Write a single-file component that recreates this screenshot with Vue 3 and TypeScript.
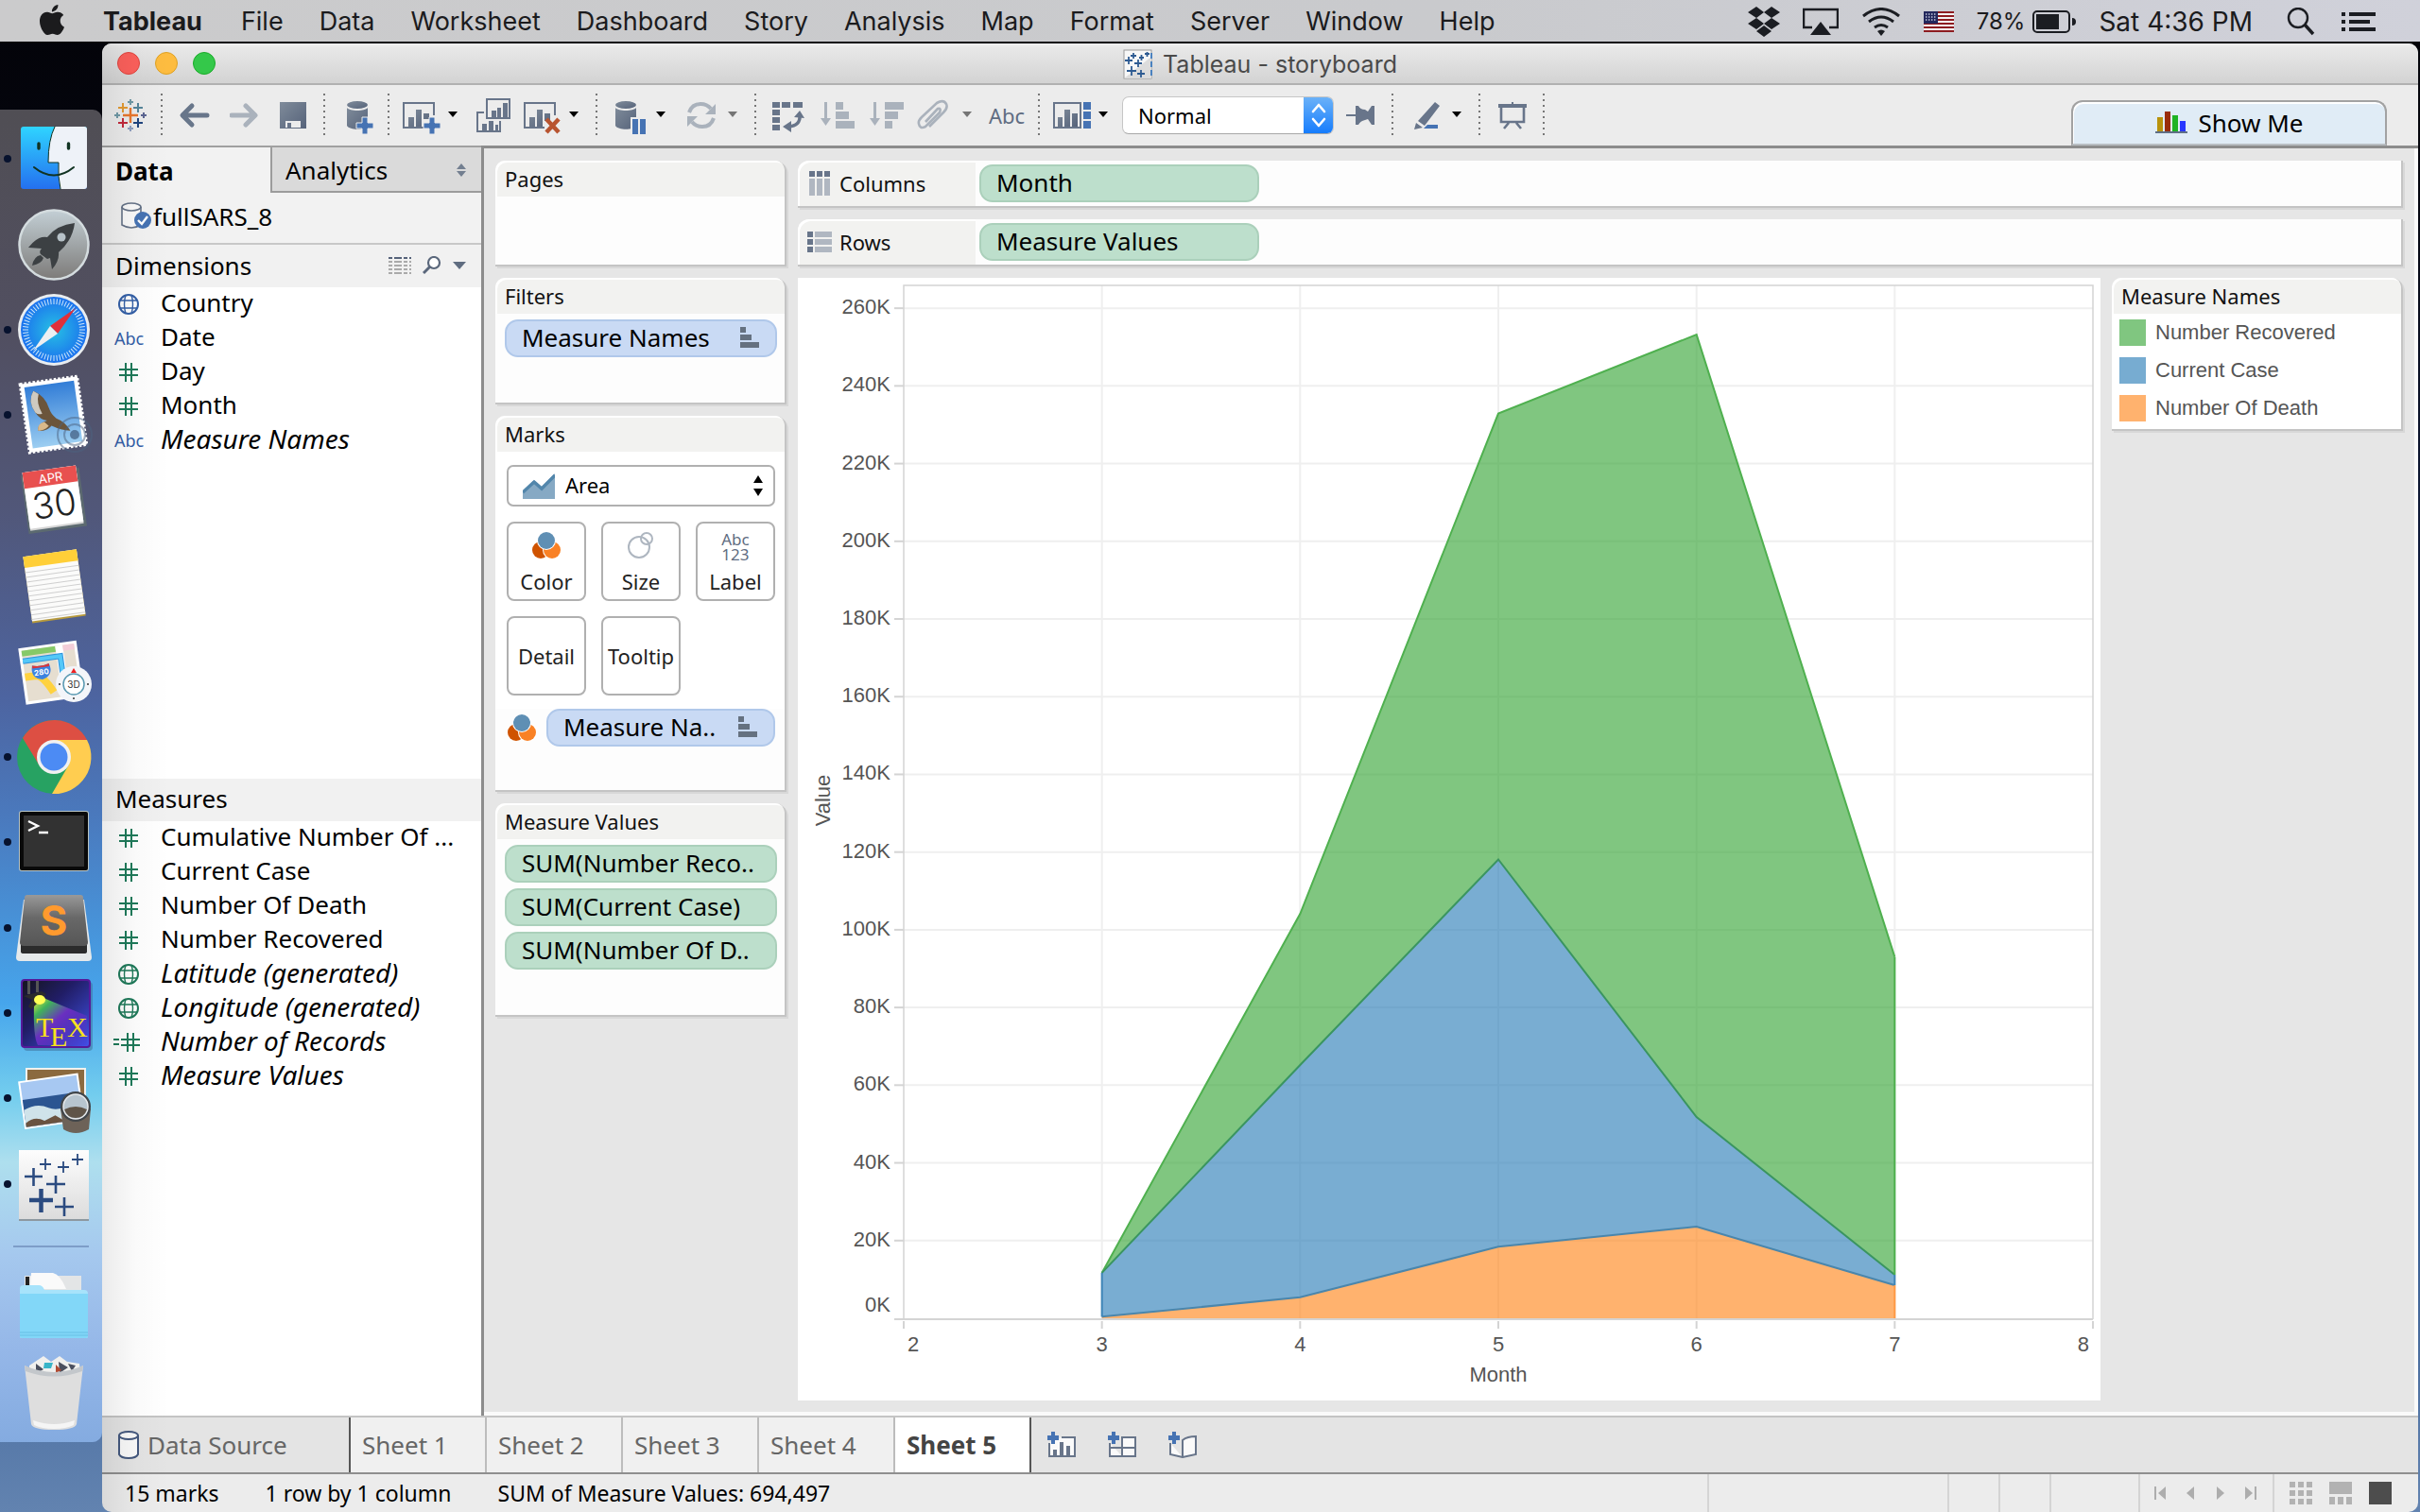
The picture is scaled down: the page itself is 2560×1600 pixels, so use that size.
<script setup lang="ts">
interface Field {
  name: string
  kind: 'geo' | 'text' | 'number' | 'calc'
  generated?: boolean
}

interface Series {
  name: string
  color: string
  stroke: string
  top: number[]
}

const menus = ['File', 'Data', 'Worksheet', 'Dashboard', 'Story', 'Analysis', 'Map', 'Format', 'Server', 'Window', 'Help']

const dimensions: Field[] = [
  { name: 'Country', kind: 'geo' },
  { name: 'Date', kind: 'text' },
  { name: 'Day', kind: 'number' },
  { name: 'Month', kind: 'number' },
  { name: 'Measure Names', kind: 'text', generated: true },
]

const measures: Field[] = [
  { name: 'Cumulative Number Of ...', kind: 'number' },
  { name: 'Current Case', kind: 'number' },
  { name: 'Number Of Death', kind: 'number' },
  { name: 'Number Recovered', kind: 'number' },
  { name: 'Latitude (generated)', kind: 'geo', generated: true },
  { name: 'Longitude (generated)', kind: 'geo', generated: true },
  { name: 'Number of Records', kind: 'calc', generated: true },
  { name: 'Measure Values', kind: 'number', generated: true },
]

const measureValues = ['SUM(Number Reco..', 'SUM(Current Case)', 'SUM(Number Of D..']
const sheets = ['Sheet 1', 'Sheet 2', 'Sheet 3', 'Sheet 4', 'Sheet 5']
const activeSheet = 'Sheet 5'

// Stacked tops in thousands, one value per month from 3 to 7
const months = [3, 4, 5, 6, 7]
const series: Series[] = [
  { name: 'Number Recovered', color: '#2ca02c', stroke: '#4fb04f', top: [11.7, 104.1, 232.9, 253.2, 93] },
  { name: 'Current Case', color: '#1f77b4', stroke: '#3a9560', top: [11.7, 65.2, 118.1, 51.8, 11.2] },
  { name: 'Number Of Death', color: '#ff7f0e', stroke: '#4a86ac', top: [0.4, 5.4, 18.4, 23.6, 8.5] },
]

const plot = { left: 112, right: 1370, top: 8, bottom: 1102 }
const xOf = (m: number): number => plot.left + ((m - 2) * (plot.right - plot.left)) / 6
const yOf = (v: number): number => 1101 - v * 4.111

const yTicks = Array.from({ length: 14 }, (_, i) => i * 20)
const xTicks = [2, 3, 4, 5, 6, 7, 8]

const linePoints = (s: Series): string[] => months.map((m, i) => `${xOf(m)},${yOf(s.top[i])}`)
const areas = series.map((s, i) => {
  const lower = series[i + 1]
  const base = lower ? linePoints(lower) : months.map((m) => `${xOf(m)},${yOf(0)}`)
  return { ...s, points: [...linePoints(s), ...base.reverse()].join(' '), line: linePoints(s).join(' ') }
})

const yLabelPos = (v: number): number => (v === 0 ? yOf(0) - 7 : yOf(v) + 6)
const anchor = (m: number): string => (m === 2 ? 'start' : m === 8 ? 'end' : 'middle')
const xLabelPos = (m: number): number => (m === 2 ? xOf(m) + 4 : m === 8 ? xOf(m) - 4 : xOf(m))

const legend = [
  { name: 'Number Recovered', cls: 'green' },
  { name: 'Current Case', cls: 'blue' },
  { name: 'Number Of Death', cls: 'orange' },
]

const dial = Array.from({ length: 60 }, (_, i) => i * 6)
const noteLines = Array.from({ length: 11 }, (_, i) => 27 + i * 5)
</script>

<template>
  <div class="desktop">
    <svg class="sprite" aria-hidden="true">
      <defs>
        <linearGradient id="steel" x1="0" y1="0" x2="1" y2="1">
          <stop offset="0" stop-color="#7f8b9a" /><stop offset="1" stop-color="#56637a" />
        </linearGradient>
        <symbol id="caret" viewBox="0 0 10 40"><path d="M0 16H10L5 22Z" /></symbol>
        <symbol id="cylinder" viewBox="0 0 30 40">
          <ellipse cx="12" cy="9" rx="11" ry="4" fill="url(#steel)" />
          <path d="M1 12c3 4 19 4 22 0V31c-3 5-19 5-22 0Z" fill="url(#steel)" />
        </symbol>
        <symbol id="balls" viewBox="0 0 30 28">
          <circle cx="9" cy="19" r="9" fill="#cf5300" />
          <circle cx="21" cy="19" r="10" fill="#fff" />
          <circle cx="21" cy="19" r="9" fill="#f98125" />
          <circle cx="15" cy="9" r="10" fill="#fff" />
          <circle cx="15" cy="9" r="9" fill="#5f8fb4" />
        </symbol>
        <symbol id="sorted" viewBox="0 0 20 22">
          <path d="M0 0h6v6H0zM0 8h12v6H0zM0 16h20v6H0z" fill="#657180" />
        </symbol>
        <symbol id="globe" viewBox="0 0 24 24">
          <g fill="none" stroke="currentColor">
            <circle cx="12" cy="12" r="10" stroke-width="2" />
            <path d="M9 2q-3 10 0 20M15 2q3 10 0 20M3 8h18M3 16h18" stroke-width="1.4" />
          </g>
        </symbol>
        <symbol id="hash" viewBox="0 0 20 20">
          <path d="M6 0h2v20H6zM12 0h2v20h-2zM0 6h20v2H0zM0 12h20v2H0z" fill="currentColor" />
        </symbol>
      </defs>
    </svg>

    <header class="menubar">
      <nav class="menus">
        <button class="apple" aria-label="Apple menu">
          <svg width="32" height="32" viewBox="0 0 24 24"><path fill="#1b1b1d" d="M12.152 6.896c-.948 0-2.415-1.078-3.96-1.04-2.04.027-3.91 1.183-4.961 3.014-2.117 3.675-.546 9.103 1.519 12.09 1.013 1.454 2.208 3.09 3.792 3.039 1.52-.065 2.09-.987 3.935-.987 1.831 0 2.35.987 3.96.948 1.637-.026 2.676-1.48 3.676-2.948 1.156-1.688 1.636-3.325 1.662-3.415-.039-.013-3.182-1.221-3.22-4.857-.026-3.04 2.48-4.494 2.597-4.559-1.429-2.09-3.623-2.324-4.39-2.376-2-.156-3.675 1.09-4.61 1.09zM15.53 3.83c.843-1.012 1.4-2.427 1.245-3.83-1.207.052-2.662.805-3.532 1.818-.78.896-1.454 2.338-1.273 3.714 1.338.104 2.715-.688 3.559-1.701" /></svg>
        </button>
        <button class="app-name">Tableau</button>
        <button v-for="m in menus" :key="m">{{ m }}</button>
      </nav>
      <div class="extras">
        <svg width="34" height="32" viewBox="0 0 34 32" fill="#1b1d22">
          <path d="M9 0l8 6-8 6-9-6zM25 0l9 6-9 6-8-6zM0 18l9-6 8 6-8 6zM17 18l8-6 9 6-9 6zM9 26l8-6 8 6-8 6z" />
        </svg>
        <svg width="38" height="30" viewBox="0 0 38 30"><path d="M10 21H1V2h36v19h-9" fill="none" stroke="#1b1d22" stroke-width="2.5" /><path d="M19 15l11 14H8z" fill="#1b1d22" /></svg>
        <svg width="42" height="30" viewBox="0 0 42 30"><g fill="none" stroke="#1b1d22" stroke-width="3"><path d="M2 9q19-15 38 0M8 15q13-10 26 0M14 21q7-5 14 0" /></g><path d="M17 25q4-3 8 0l-4 5z" fill="#1b1d22" /></svg>
        <svg width="32" height="22" viewBox="0 0 32 22">
          <path fill="#f4f4f4" d="M0 0h32v22H0z" /><path fill="#8d1c20" d="M0 0h32v2H0zM0 4h32v2H0zM0 8h32v2H0zM0 12h32v2H0zM0 16h32v2H0zM0 20h32v2H0z" />
          <path fill="#23285c" d="M0 0h15v13H0z" /><path d="M2 3h12M2 6h12M2 9h12" stroke="#c8cbe0" stroke-width="1.4" stroke-dasharray="1.4 1.6" />
        </svg>
        <div class="battery">
          <span>78%</span>
          <svg width="46" height="24" viewBox="0 0 46 24"><rect x="1" y="1" width="38" height="22" rx="4" fill="none" stroke="#1b1d22" stroke-width="2" /><path fill="#1b1d22" d="M4 4h24v16H4zM42 8q4 0 4 4t-4 4z" /></svg>
        </div>
        <time>Sat 4:36 PM</time>
        <button aria-label="Spotlight">
          <svg width="30" height="30" viewBox="0 0 30 30" fill="none" stroke="#1b1d22"><circle cx="12" cy="11" r="10" stroke-width="2.4" /><path d="M19 18l9 10" stroke-width="3.4" /></svg>
        </button>
        <button aria-label="Notification Center">
          <svg width="38" height="20" viewBox="0 0 38 20" fill="#1b1d22"><path d="M0 0h4v4H0zM8 0h28v4H8zM0 8h4v4H0zM8 8h22v4H8zM0 16h4v4H0zM8 16h28v4H8z" /></svg>
        </button>
      </div>
    </header>

    <div class="stage">
      <aside class="dock-space">
        <nav class="dock" aria-label="Dock">
          <button class="running" aria-label="Finder">
            <svg viewBox="0 0 108 90">
              <defs><linearGradient id="fb" x1="0" y1="0" x2="0" y2="1"><stop offset="0" stop-color="#2fd4ff" /><stop offset="1" stop-color="#2470ef" /></linearGradient></defs>
              <rect x="22" y="11" width="70" height="66" rx="3" fill="url(#fb)" />
              <path d="M58 11H89q3 0 3 3V74q0 3-3 3H64Q61 64 62 49H51Q51 25 58 11Z" fill="#eef2f8" />
              <g fill="none" stroke="#132" stroke-linecap="round"><path d="M58 11Q51 25 51 49H62Q61 64 64 77" stroke-width="1" /><path d="M41 29v5M72.500 29v5" stroke-width="3.400" /><path d="M36 54Q57 71 78 54" stroke-width="2" /></g>
            </svg>
          </button>
          <button aria-label="Launchpad">
            <svg viewBox="0 0 108 90">
              <defs><linearGradient id="lp" x1="0" y1="0" x2="0" y2="1"><stop offset="0" stop-color="#c3cfd5" /><stop offset="1" stop-color="#7d7b79" /></linearGradient></defs>
              <circle cx="57" cy="45" r="36.500" fill="url(#lp)" stroke="#d4dcdf" stroke-width="2.500" />
              <path d="M79 22Q60 24 50 37Q40 35 30 48L44 49Q41 52 43 55L50 60L53 59L55 71Q63 62 62 53Q77 40 79 22Z" fill="#3c4043" />
              <circle cx="65" cy="37" r="4.500" fill="#b7c2c8" /><path d="M43 56Q36 57 34 67Q44 65 46 59Z" fill="#3c4043" />
            </svg>
          </button>
          <button class="running" aria-label="Safari">
            <svg viewBox="0 0 108 90">
              <defs><radialGradient id="sf"><stop offset="0" stop-color="#27c0e4" /><stop offset="1" stop-color="#1b72ee" /></radialGradient></defs>
              <circle cx="57" cy="45" r="38" fill="#e9edf0" /><circle cx="57" cy="45" r="35" fill="url(#sf)" />
              <path v-for="a in dial" :key="a" d="M57 12v6" stroke="#cfe6fb" stroke-width="1" :transform="`rotate(${a} 57 45)`" />
              <path d="M80 22L61 49L53 41Z" fill="#e0303a" /><path d="M35 67L53 41L61 49Z" fill="#eceff1" />
            </svg>
          </button>
          <button class="running" aria-label="Mail">
            <svg viewBox="0 0 108 90">
              <defs><linearGradient id="sky" x1="0" y1="0" x2="0" y2="1"><stop offset="0" stop-color="#2f7bd6" /><stop offset="1" stop-color="#9fd0f2" /></linearGradient></defs>
              <g transform="rotate(-8 57 45)">
                <rect x="28" y="10" width="57" height="69" fill="url(#sky)" stroke="#fff" stroke-width="4" />
                <rect x="26" y="8" width="61" height="73" fill="none" stroke="#fff" stroke-width="3" stroke-dasharray="2.500 2" />
                <path d="M39 17Q31 27 38 40Q42 48 49 50Q38 52 38 59Q46 62 53 56Q62 62 72 64Q68 54 59 49Q54 44 53 38Q51 24 39 17Z" fill="#6b553b" />
                <path d="M39 17Q31 27 38 40Q41 43 45 42Q40 30 44 21Z" fill="#cfcac0" /><path d="M38 59Q38 52 46 51L50 56Q44 61 38 59Z" fill="#d9b98a" />
              </g>
              <g fill="none" stroke="#4d6380" opacity=".5" stroke-width="2"><circle cx="79" cy="66" r="18" /><circle cx="79" cy="66" r="11" /></g>
              <circle cx="79" cy="66" r="5" fill="#405a7c" opacity=".7" />
            </svg>
          </button>
          <button aria-label="Calendar">
            <svg viewBox="0 0 108 90">
              <g transform="rotate(-8 57 45)">
                <rect x="26" y="14" width="62" height="62" fill="#5c6a70" />
                <rect x="28" y="11" width="57" height="62" fill="#d5d5d5" /><rect x="28" y="11" width="57" height="60" fill="#fff" /><rect x="28" y="11" width="57" height="17" fill="#e8504f" />
                <text x="57" y="25" class="cal-month">APR</text><text x="57" y="62" class="cal-day">30</text>
              </g>
            </svg>
          </button>
          <button aria-label="Notes">
            <svg viewBox="0 0 108 90">
              <g transform="rotate(-8 57 45)">
                <rect x="29" y="10" width="57" height="71" fill="#b79a3c" /><rect x="29" y="10" width="57" height="69" fill="#fbfbfa" /><rect x="29" y="10" width="57" height="12" fill="#ffcf38" />
                <path v-for="y in noteLines" :key="y" :d="`M29 ${y}H86`" stroke="#cfcfcf" stroke-width="1" />
              </g>
            </svg>
          </button>
          <button aria-label="Maps">
            <svg viewBox="0 0 108 90">
              <g transform="rotate(-8 52 45)">
                <rect x="23" y="16" width="62" height="60" fill="#fff" /><rect x="26" y="19" width="56" height="54" fill="#e6ded0" />
                <path d="M26 19h36v6H26z" fill="#86c968" /><path d="M62 19h8v54h-8z" fill="#fff" /><path d="M70 19h12v6H70z" fill="#f3cdd8" />
                <path d="M26 30H66V52" fill="none" stroke="#2f93dc" stroke-width="6" /><path d="M26 30H66V52" fill="none" stroke="#54c8f8" stroke-width="4" />
                <path d="M26 47h12q7 1 16 20" fill="none" stroke="#ffd23f" stroke-width="8" />
                <path d="M35 36q9 3 18 0q4 13-9 16q-13-3-9-16Z" fill="#3b82e0" /><path d="M35 36q9 3 18 0v3H35z" fill="#d9363a" />
                <text x="44" y="47" class="shield">280</text>
              </g>
              <circle cx="78" cy="58" r="19" fill="#f3f5f9" /><circle cx="78" cy="58" r="11" fill="#fff" stroke="#5b9ab2" stroke-width="1.500" />
              <path d="M78 41l3 5h-6z" fill="#e22" /><path d="M62 58h2M92 58h2M78 72v2" stroke="#333" stroke-width="1.500" />
              <text x="78" y="62" class="three-d">3D</text>
            </svg>
          </button>
          <button class="running" aria-label="Chrome">
            <svg viewBox="0 0 108 90">
              <circle cx="57" cy="45" r="39" fill="#27a262" />
              <path d="M24 25A39 39 0 0 1 92 27H57L41 53Z" fill="#dd4f43" />
              <path d="M92 27A39 39 0 0 1 55 84L73 53Q77 36 57 27Z" fill="#ffcd50" />
              <circle cx="57" cy="45" r="18" fill="#f1f1f1" /><circle cx="57" cy="45" r="14.500" fill="#4c8bf4" />
            </svg>
          </button>
          <button class="running" aria-label="Terminal">
            <svg viewBox="0 0 108 90">
              <rect x="20" y="12" width="74" height="64" rx="3" fill="#b9c4c2" /><rect x="21" y="13" width="72" height="62" rx="2" fill="#090909" /><rect x="25" y="17" width="64" height="54" fill="#323232" />
              <path d="M30 23l10 5-10 5M41 35h10" fill="none" stroke="#fff" stroke-width="2.400" />
            </svg>
          </button>
          <button class="running" aria-label="Sublime Text">
            <svg viewBox="0 0 108 90">
              <defs><linearGradient id="su" x1="0" y1="0" x2="0" y2="1"><stop offset="0" stop-color="#999" /><stop offset=".45" stop-color="#686868" /><stop offset="1" stop-color="#565656" /></linearGradient></defs>
              <path d="M25 15H89L97 76q0 4-4 4H21q-4 0-4-4Z" fill="#e6e9ea" />
              <path d="M22 60H92V70q0 2-3 2H25q-3 0-3-2Z" fill="#2c2c2c" />
              <path d="M29 10H85q3 0 3 3L93 60q0 4-4 4H25q-4 0-4-4L26 13q0-3 3-3Z" fill="url(#su)" />
              <text x="57" y="53" class="sublime">S</text>
            </svg>
          </button>
          <button class="running" aria-label="TeXShop">
            <svg viewBox="0 0 108 90">
              <defs>
                <linearGradient id="tx" x1="0" y1="0" x2="1" y2="1"><stop offset="0" stop-color="#15151c" /><stop offset=".4" stop-color="#211d66" /><stop offset="1" stop-color="#4254ee" /></linearGradient>
                <linearGradient id="ray" x1="0" y1="0" x2="1" y2="1"><stop offset="0" stop-color="#f7ee3c" /><stop offset=".2" stop-color="#3fb35a" /><stop offset=".45" stop-color="#6a2fc0" /><stop offset="1" stop-color="#4a36d0" stop-opacity=".2" /></linearGradient>
              </defs>
              <rect x="25" y="12" width="73" height="73" rx="4" fill="#3b6c94" opacity=".5" />
              <rect x="23" y="10" width="72" height="71" rx="3" fill="url(#tx)" stroke="#55199a" stroke-width="2" />
              <path d="M36 36L46 29L92 48V79H40Q35 70 36 36Z" fill="url(#ray)" />
              <path d="M29 11h3v14h-3zM38 11h3v12h-3z" fill="#555" /><path d="M25 27L44 22L49 25L33 41L30 38L34 31Z" fill="#2b2b2d" /><ellipse cx="42" cy="31" rx="6" ry="5" fill="#ffff55" />
              <text x="38" y="70" class="tex">T</text><text x="53" y="80" class="tex">E</text><text x="71" y="70" class="tex">X</text>
            </svg>
          </button>
          <button class="running" aria-label="Preview">
            <svg viewBox="0 0 108 90">
              <rect x="28" y="13" width="62" height="50" fill="#8b6a3f" stroke="#f1f1ee" stroke-width="2" />
              <g transform="rotate(-8 52 45)">
                <rect x="22" y="22" width="64" height="51" fill="#fff" /><rect x="24" y="24" width="60" height="47" fill="#a7c8f2" /><path d="M24 42h60v29H24z" fill="#2b5591" />
                <path d="M24 53q14-6 26 1t34-4v21H24z" fill="#cfe3ea" /><path d="M24 67q10-7 20 0l12-4 10 8H24z" fill="#6a5340" />
              </g>
              <path d="M64 55h32l-2 22q-14 8-27 0Z" fill="#6d6258" /><circle cx="80" cy="53" r="16" fill="#41464a" /><circle cx="80" cy="53" r="13" fill="#b7c5cf" stroke="#e7eaec" stroke-width="1.500" />
              <path d="M68 56q12-6 24 0q-3 9-12 9t-12-9Z" fill="#5f5448" />
            </svg>
          </button>
          <button class="running" aria-label="Tableau">
            <svg viewBox="0 0 108 90">
              <defs><linearGradient id="tb" x1="0" y1="0" x2="0" y2="1"><stop offset="0" stop-color="#fdfdfd" /><stop offset="1" stop-color="#dcdcdc" /></linearGradient></defs>
              <rect x="20" y="10" width="74" height="74" fill="#8d98a0" /><rect x="20" y="9" width="74" height="73" fill="url(#tb)" />
              <g stroke="#2b4b80" fill="none">
                <path d="M26 37h19M35.500 28v19M49 45h20M59 36v19M58 69h20M68 59v20" stroke-width="2.600" />
                <path d="M31 62h25M43.500 50v25" stroke-width="4.500" /><path d="M42 24h12M48 18v12M61 27h12M67 21v12M76 19h12M82 13v12" stroke-width="1.800" />
              </g>
            </svg>
          </button>
          <hr />
          <button aria-label="Documents">
            <svg viewBox="0 0 108 90">
              <path d="M26 12h60v20H26z" fill="#e3e5e6" /><path d="M33 9H56q8 2 14 17H32z" fill="#fafafa" /><path d="M27 13h4v9h-4z" fill="#222" />
              <path d="M21 26q0-4 4-4H41q4 0 6 5H89q4 0 4 4V76q0 2-2 2H23q-2 0-2-2Z" fill="#a7e3fb" /><path d="M21 31H93V76q0 2-2 2H23q-2 0-2-2Z" fill="#82d7f8" /><path d="M21 72H93M21 75H93" stroke="#66bfe4" stroke-width="1" />
            </svg>
          </button>
          <button aria-label="Trash">
            <svg viewBox="0 0 108 90">
              <path d="M31 16l15-10 8 6 9-6 8 6 13 2 1 10H31z" fill="#f0f0ee" /><path d="M38 14l8 6-8 5zM62 12l10 6-9 6zM72 14l8 2-4 6z" fill="#4a4f5e" /><path d="M47 13h9l-2 6h-8z" fill="#39b5c8" /><path d="M59 15l6 6-6 3z" fill="#b04a32" />
              <path d="M26 16Q57 32 88 16L81 78q-2 6-24 6t-24-6Z" fill="#dedede" /><path d="M26 16Q57 30 88 16L87 22Q57 33 27 22Z" fill="#c3c7cb" /><path d="M35 74q22 8 44 0l-1 5q-8 4-21 4t-21-4Z" fill="#f5f5f5" />
            </svg>
          </button>
        </nav>
      </aside>

      <main class="window">
        <div class="titlebar">
          <div class="lights">
            <button class="close" aria-label="Close"></button><button class="mini" aria-label="Minimize"></button><button class="zoom" aria-label="Zoom"></button>
          </div>
          <h1>
            <svg width="32" height="32" viewBox="0 0 32 32">
              <rect x="1" y="1" width="29" height="30" fill="#f7f7f7" stroke="#9a9a9a" /><path d="M1 31L30 8V31Z" fill="#dcdcdc" />
              <path d="M2 12h8M6 8v8M12 15h8M16 11v8M4 23h10M9 18v10M15 26h8M19 22v8M8 7h6M11 4v6M17 9h5M19.500 6v6M23 5h5M25.500 3v5" stroke="#2e5b92" stroke-width="1.800" />
              <path d="M30 4v26" stroke="#4a82c0" stroke-width="2" stroke-dasharray="6 3" />
            </svg>
            Tableau - storyboard
          </h1>
        </div>

        <div class="toolbar" role="toolbar" aria-label="Tableau">
          <button aria-label="Start page">
            <svg width="36" height="40" viewBox="0 0 36 40" fill="none" stroke-width="2">
              <path d="M9 20h16M17 12v16" stroke="#e8762c" stroke-width="2.400" /><path d="M4 12h10M9 7v10" stroke="#e39a32" /><path d="M20 12h10M25 7v10" stroke="#55859a" />
              <path d="M4 28h10M9 23v10" stroke="#c22a3c" /><path d="M20 28h10M25 23v10" stroke="#1f447e" /><path d="M14 6h6M17 3v6M0 20h6M3 17v6" stroke="#7099a6" /><path d="M28 20h6M31 17v6" stroke="#5b6591" /><path d="M14 34h6M17 31v6" stroke="#8f9fbf" />
            </svg>
          </button>
          <i class="sep"></i>
          <button aria-label="Back"><svg width="34" height="40" viewBox="0 0 34 40"><path d="M14 10L4 20L14 30M5 20H30" fill="none" stroke="#68768a" stroke-width="5" stroke-linecap="round" stroke-linejoin="round" /></svg></button>
          <button aria-label="Forward"><svg width="34" height="40" viewBox="0 0 34 40"><path d="M17 10L27 20L17 30M26 20H2" fill="none" stroke="#aab2bc" stroke-width="5" stroke-linecap="round" stroke-linejoin="round" /></svg></button>
          <button aria-label="Save"><svg width="28" height="40" viewBox="0 0 28 40"><path d="M0 6H28V34H0Z" fill="url(#steel)" /><path d="M6 26H22V33H6Z" fill="#ececec" /><path d="M8 28h4v5H8z" fill="#68758a" /></svg></button>
          <i class="sep"></i>
          <button aria-label="New data source"><svg width="30" height="40" viewBox="0 0 30 40"><use href="#cylinder" width="30" height="40" /><path d="M17 22h6v6h6v6h-6v6h-6v-6h-6v-6h6z" fill="#4673b3" stroke="#ececec" stroke-width="1" /></svg></button>
          <i class="sep"></i>
          <button aria-label="New worksheet"><svg width="42" height="40" viewBox="0 0 42 40"><path d="M33 20V7H1V33H24" fill="none" stroke="#68758a" stroke-width="2" /><path d="M6 22h6v10H6zM14 14h6v18h-6zM22 18h6v6h-6z" fill="url(#steel)" /><path d="M28 22h6v6h6v6h-6v6h-6v-6h-6v-6h6z" fill="#4673b3" stroke="#ececec" stroke-width="1" /></svg></button>
          <button aria-label="New options"><svg width="10" height="40"><use href="#caret" width="10" height="40" /></svg></button>
          <button aria-label="Duplicate"><svg width="38" height="40" viewBox="0 0 38 40"><path d="M11 3H35V23H11ZM8 17H1V37H25V26" fill="none" stroke="#68758a" stroke-width="2" /><path d="M16 15h5v7h-5zM22 12h4v10h-4zM28 7h5v15h-5zM6 29h5v7H6zM13 26h5v10h-5zM20 30h3v6h-3z" fill="#68758a" /></svg></button>
          <button aria-label="Clear sheet"><svg width="42" height="40" viewBox="0 0 42 40"><path d="M33 20V7H1V33H22" fill="none" stroke="#68758a" stroke-width="2" /><path d="M6 22h6v10H6zM14 14h6v18h-6zM22 18h6v8h-6z" fill="url(#steel)" /><path d="M24 24l13 14M37 24L24 38" stroke="#b85430" stroke-width="4.500" /></svg></button>
          <button aria-label="Clear options"><svg width="10" height="40"><use href="#caret" width="10" height="40" /></svg></button>
          <i class="sep"></i>
          <button aria-label="Pause updates"><svg width="34" height="40" viewBox="0 0 34 40"><use href="#cylinder" width="30" height="40" /><path d="M17 22H34V40H17Z" fill="#ececec" /><path d="M19 24h6v16h-6zM27 24h6v16h-6z" fill="#4673b3" /></svg></button>
          <button aria-label="Pause options"><svg width="10" height="40"><use href="#caret" width="10" height="40" /></svg></button>
          <button aria-label="Refresh"><svg width="32" height="40" viewBox="0 0 32 40"><g fill="none" stroke="#aab2bc" stroke-width="4"><path d="M3 17Q6 8 15 8Q22 8 26 13M29 23Q26 32 17 32Q10 32 6 27" /></g><path d="M31 8V19H20ZM1 32V21H12Z" fill="#aab2bc" /></svg></button>
          <button class="dim" aria-label="Refresh options"><svg width="10" height="40"><use href="#caret" width="10" height="40" /></svg></button>
          <i class="sep"></i>
          <button aria-label="Swap rows and columns"><svg width="36" height="40" viewBox="0 0 36 40"><path d="M1 6h8v6H1zM11 6h9v6h-9zM23 6h10v6H23zM1 14h8v6H1zM1 22h8v6H1zM1 30h8v6H1z" fill="#68758a" /><path d="M30 20Q31 31 18 32" fill="none" stroke="#68758a" stroke-width="3.500" /><path d="M24 22l6-7 5 8zM21 26v12l-9-6z" fill="#68758a" /></svg></button>
          <button aria-label="Sort ascending"><svg width="36" height="40" viewBox="0 0 36 40" fill="#aab2bc"><path d="M4 6h3v17h4l-5.500 8L0 23h4zM16 6h8v8h-8zM16 16h14v8H16zM16 26h20v8H16z" /></svg></button>
          <button aria-label="Sort descending"><svg width="36" height="40" viewBox="0 0 36 40" fill="#aab2bc"><path d="M4 6h3v17h4l-5.500 8L0 23h4zM16 6h20v8H16zM16 16h14v8H16zM16 26h8v8h-8z" /></svg></button>
          <button aria-label="Group members"><svg width="34" height="40" viewBox="0 0 34 40"><path d="M9 27L22 13Q26 12 24 17L9 32Q3 35 2 29Q1 26 5 22L21 7Q28 3 31 8Q33 12 28 17L13 32" fill="none" stroke="#aab2bc" stroke-width="2.600" /></svg></button>
          <button class="dim" aria-label="Group options"><svg width="10" height="40"><use href="#caret" width="10" height="40" /></svg></button>
          <button class="abc">Abc</button>
          <i class="sep"></i>
          <button aria-label="Show cards"><svg width="42" height="40" viewBox="0 0 42 40"><path d="M1 7H29V33H1Z" fill="none" stroke="#68758a" stroke-width="2" /><path d="M5 22h5v10H5zM12 14h6v18h-6zM20 18h6v14h-6z" fill="url(#steel)" /><path d="M32 6h8v8h-8zM32 16h8v8h-8zM32 26h8v8h-8z" fill="#4673b3" /></svg></button>
          <button aria-label="Card options"><svg width="10" height="40"><use href="#caret" width="10" height="40" /></svg></button>
          <div class="fit">
            <select aria-label="Fit"><option>Normal</option></select>
            <svg width="32" height="40" viewBox="0 0 32 40"><path d="M10 16l6-7 6 7M10 24l6 7 6-7" fill="none" stroke="#fff" stroke-width="2.600" stroke-linecap="round" stroke-linejoin="round" /></svg>
          </div>
          <button aria-label="Fix axes"><svg width="32" height="40" viewBox="0 0 32 40"><path d="M0 19h10V10h3q2 4 7 4l3 2 4-6h3v20h-3l-4-6-3 1q-5 1-7 5h-3v-9H0z" fill="#68758a" /></svg></button>
          <i class="sep"></i>
          <button aria-label="Highlight"><svg width="32" height="40" viewBox="0 0 32 40"><path d="M25 6l5 4L14 31l-7-5zM5 28l7 5-9 2z" fill="#68758a" /><path d="M13 34l4-4h11v4z" fill="#4673b3" /></svg></button>
          <button aria-label="Highlight options"><svg width="10" height="40"><use href="#caret" width="10" height="40" /></svg></button>
          <i class="sep"></i>
          <button aria-label="Presentation mode"><svg width="32" height="40" viewBox="0 0 32 40"><path d="M1 8H31V12H1ZM15 6h2v3h-2z" fill="#68758a" /><path d="M4 12V27H28V12M12 28L7 34M20 28l5 6" fill="none" stroke="#68758a" stroke-width="2.600" /></svg></button>
          <i class="sep"></i>
          <button class="show-me">
            <svg width="34" height="26" viewBox="0 0 34 26"><path d="M2 7h6v15H2z" fill="#b8920c" /><path d="M10 1h6v21h-6z" fill="#992d0a" /><path d="M18 5h6v17h-6z" fill="#1fb324" /><path d="M26 11h6v11h-6z" fill="#2837ff" /><path d="M0 22h34v2H0z" fill="#5f6f85" /></svg>
            Show Me
          </button>
        </div>

        <div class="body">
          <section class="data-pane">
            <div class="pane-tabs">
              <button class="active">Data</button>
              <button class="analytics">Analytics
                <svg width="10" height="14" viewBox="0 0 10 14" fill="#737f90"><path d="M5 0l5 6H0zM0 8h10l-5 6z" /></svg>
              </button>
            </div>
            <button class="source">
              <svg width="34" height="30" viewBox="0 0 34 30">
                <g fill="#fafafa" stroke="#657287" stroke-width="1.600"><path d="M2 5V24Q12 30 22 24V5" /><ellipse cx="12" cy="5" rx="10" ry="4" /></g>
                <circle cx="24" cy="19" r="9" fill="#4673b3" /><path d="M19 19l4 4 6-8" fill="none" stroke="#fff" stroke-width="2.400" />
              </svg>fullSARS_8
            </button>
            <header class="pane-head">
              <h2>Dimensions</h2>
              <button aria-label="View fields"><svg width="24" height="18" viewBox="0 0 24 18"><path d="M0 1h24" stroke="#56637a" stroke-width="2" stroke-dasharray="4 2 8 2" /><path d="M0 5h24M0 9h24M0 13h24M0 17h24" stroke="#aaa" stroke-width="2" stroke-dasharray="4 2 8 2" /></svg></button>
              <button aria-label="Find field"><svg width="20" height="20" viewBox="0 0 20 20" fill="none" stroke="#5a677b"><circle cx="12" cy="7" r="6" stroke-width="2.200" fill="#fff" /><path d="M8 11l-7 7" stroke-width="3" /></svg></button>
              <button aria-label="Dimension options"><svg width="14" height="8" viewBox="0 0 14 8"><path d="M0 0h14L7 8z" fill="#5f6c80" /></svg></button>
            </header>
            <ul class="fields dims">
              <li v-for="f in dimensions" :key="f.name" :class="{ generated: f.generated }">
                <span class="glyph">
                  <svg v-if="f.kind === 'geo'" width="24" height="24"><use href="#globe" width="24" height="24" /></svg>
                  <svg v-else-if="f.kind === 'number'" class="green" width="20" height="20"><use href="#hash" width="20" height="20" /></svg>
                  <template v-else>Abc</template>
                </span>{{ f.name }}
              </li>
            </ul>
            <header class="pane-head"><h2>Measures</h2></header>
            <ul class="fields meas">
              <li v-for="f in measures" :key="f.name" :class="{ generated: f.generated }">
                <span class="glyph green">
                  <svg v-if="f.kind === 'geo'" width="24" height="24"><use href="#globe" width="24" height="24" /></svg>
                  <svg v-else-if="f.kind === 'calc'" width="32" height="20" viewBox="0 0 32 20"><path d="M0 6h6v2H0zM0 11h6v2H0z" fill="currentColor" /><use href="#hash" x="8" width="20" height="20" /></svg>
                  <svg v-else width="20" height="20"><use href="#hash" width="20" height="20" /></svg>
                </span>{{ f.name }}
              </li>
            </ul>
          </section>

          <section class="workspace">
            <div class="cards">
              <article class="card pages"><h3>Pages</h3></article>
              <article class="card filters">
                <h3>Filters</h3>
                <div class="stack"><button class="pill dim-pill">Measure Names<svg width="20" height="22"><use href="#sorted" width="20" height="22" /></svg></button></div>
              </article>
              <article class="card marks">
                <h3>Marks</h3>
                <div class="marks-body">
                  <div class="mark-type">
                    <svg class="area-icon" width="34" height="28" viewBox="0 0 34 28"><path d="M0 20L11 9L20 17L34 1V28H0Z" fill="#86a9c4" /><path d="M0 21L12 10L20 17L34 3" fill="none" stroke="#5286ab" stroke-width="3.500" /></svg>
                    <select aria-label="Mark type"><option>Area</option></select>
                    <svg class="updown" width="10" height="22" viewBox="0 0 10 22"><path d="M5 0l5 8H0zM0 14h10l-5 8z" /></svg>
                  </div>
                  <div class="mark-grid">
                    <button class="with-icon"><svg width="30" height="28"><use href="#balls" width="30" height="28" /></svg>Color</button>
                    <button class="with-icon"><svg width="30" height="28" viewBox="0 0 30 28" fill="none" stroke="#aeb6c0" stroke-width="2"><circle cx="13" cy="16" r="11" /><circle cx="21" cy="7" r="6" /></svg>Size</button>
                    <button class="with-icon"><span class="abc-icon"><span>Abc</span><span>123</span></span>Label</button>
                    <button>Detail</button>
                    <button>Tooltip</button>
                  </div>
                </div>
                <div class="encoding">
                  <svg width="30" height="28"><use href="#balls" width="30" height="28" /></svg>
                  <button class="pill dim-pill">Measure Na..<svg width="20" height="22"><use href="#sorted" width="20" height="22" /></svg></button>
                </div>
              </article>
              <article class="card values">
                <h3>Measure Values</h3>
                <div class="stack"><button v-for="m in measureValues" :key="m" class="pill">{{ m }}</button></div>
              </article>
            </div>

            <div class="view">
              <div class="shelf">
                <h3><svg width="26" height="26" viewBox="0 0 26 26"><path d="M2 0h6v6H2zM10 0h6v6h-6zM18 0h6v6h-6z" fill="#68758a" /><path d="M2 8h6v18H2zM10 8h6v18h-6zM18 8h6v18h-6z" fill="#b0b7c1" /></svg>Columns</h3>
                <button class="pill">Month</button>
              </div>
              <div class="shelf">
                <h3><svg width="26" height="26" viewBox="0 0 26 26"><path d="M0 2h6v6H0zM0 10h6v6H0zM0 18h6v6H0z" fill="#68758a" /><path d="M8 2h18v6H8zM8 10h18v6H8zM8 18h18v6H8z" fill="#b0b7c1" /></svg>Rows</h3>
                <button class="pill">Measure Values</button>
              </div>
              <div class="canvas">
                <div class="chart">
                  <svg viewBox="0 0 1378 1188" role="img" aria-label="Measure values by month">
                    <g stroke="#efefef" stroke-width="2">
                      <line v-for="t in yTicks.slice(1)" :key="t" :x1="plot.left" :x2="plot.right" :y1="yOf(t)" :y2="yOf(t)" />
                      <line v-for="m in months" :key="m" :x1="xOf(m)" :x2="xOf(m)" :y1="plot.top" :y2="plot.bottom" />
                    </g>
                    <g v-for="a in areas" :key="a.name">
                      <polygon :points="a.points" :fill="a.color" fill-opacity="0.6" />
                      <polyline :points="a.line" fill="none" :stroke="a.stroke" stroke-width="2" />
                    </g>
                    <g stroke-width="2">
                      <line :x1="xOf(3)" :x2="xOf(3)" :y1="yOf(11.7)" :y2="yOf(0.4)" stroke="#3f86b8" />
                      <line :x1="xOf(7)" :x2="xOf(7)" :y1="yOf(93)" :y2="yOf(11.2)" stroke="#4fb04f" />
                      <line :x1="xOf(7)" :x2="xOf(7)" :y1="yOf(11.2)" :y2="yOf(8.5)" stroke="#3f86b8" />
                      <line :x1="xOf(7)" :x2="xOf(7)" :y1="yOf(8.5)" :y2="yOf(0)" stroke="#ff9a45" />
                    </g>
                    <g stroke="#d4d4d4" fill="none" stroke-width="2">
                      <path :d="`M${plot.left} ${plot.bottom}V${plot.top}H${plot.right}V${plot.bottom}`" stroke-width="1.500" />
                      <path :d="`M${plot.left - 10} ${plot.bottom}H${plot.right}`" />
                      <line v-for="t in yTicks.slice(1)" :key="t" :x1="plot.left - 10" :x2="plot.left" :y1="yOf(t)" :y2="yOf(t)" />
                      <line v-for="m in xTicks" :key="m" :x1="xOf(m)" :x2="xOf(m)" :y1="plot.bottom + 2" :y2="plot.bottom + 10" />
                    </g>
                    <g class="axis">
                      <text v-for="t in yTicks" :key="t" :x="plot.left - 14" :y="yLabelPos(t)" text-anchor="end">{{ t }}K</text>
                      <text v-for="m in xTicks" :key="m" :x="xLabelPos(m)" :y="plot.bottom + 34" :text-anchor="anchor(m)">{{ m }}</text>
                      <text :x="xOf(5)" :y="plot.bottom + 66" text-anchor="middle">Month</text>
                      <text transform="translate(34 553) rotate(-90)" text-anchor="middle">Value</text>
                    </g>
                  </svg>
                </div>
                <article class="card legend">
                  <h3>Measure Names</h3>
                  <ul><li v-for="l in legend" :key="l.name"><i :class="l.cls"></i>{{ l.name }}</li></ul>
                </article>
              </div>
            </div>
          </section>
        </div>

        <nav class="sheet-tabs">
          <button class="data-source">
            <svg width="22" height="30" viewBox="0 0 22 30" fill="#fafafa" stroke="#44587e" stroke-width="2"><path d="M1 5V25Q3 29 11 29T21 25V5" /><ellipse cx="11" cy="5" rx="10" ry="4" /></svg>Data Source
          </button>
          <button v-for="s in sheets" :key="s" class="sheet" :class="{ active: s === activeSheet }">{{ s }}</button>
          <div class="new-tabs">
            <button aria-label="New worksheet"><svg width="32" height="28" viewBox="0 0 32 28"><path d="M2 12V26H29V6H15" fill="#fafafa" stroke="#68758a" stroke-width="2" /><path d="M6 19h4v6H6zM13 11h4v14h-4zM20 15h4v10h-4z" fill="#68758a" /><path d="M4 0h4v4h4v5H8v4H4V9H0V4h4z" fill="#4673b3" /></svg></button>
            <button aria-label="New dashboard"><svg width="32" height="28" viewBox="0 0 32 28"><path d="M2 12V26H29V6H15V26M2 17H29" fill="#fafafa" stroke="#68758a" stroke-width="2" /><path d="M4 0h4v4h4v5H8v4H4V9H0V4h4z" fill="#4673b3" /></svg></button>
            <button aria-label="New story"><svg width="32" height="28" viewBox="0 0 32 28"><path d="M2 12V24L15 27L29 24V5Q20 5 15 9V27" fill="#fafafa" stroke="#68758a" stroke-width="2" /><path d="M4 0h4v4h4v5H8v4H4V9H0V4h4z" fill="#4673b3" /></svg></button>
          </div>
        </nav>

        <footer class="status">
          <span>15 marks</span><span>1 row by 1 column</span><span>SUM of Measure Values: 694,497</span>
          <div class="status-cells">
            <i></i><i></i><i></i><i></i>
            <div class="pager">
              <button aria-label="First"><svg width="12" height="14" viewBox="0 0 12 14"><path d="M0 0h2v14H0zM12 0v14L4 7z" /></svg></button>
              <button aria-label="Previous"><svg width="12" height="14" viewBox="0 0 12 14"><path d="M10 0v14L2 7z" /></svg></button>
              <button aria-label="Next"><svg width="12" height="14" viewBox="0 0 12 14"><path d="M2 0v14l8-7z" /></svg></button>
              <button aria-label="Last"><svg width="12" height="14" viewBox="0 0 12 14"><path d="M10 0h2v14h-2zM0 0v14l8-7z" /></svg></button>
            </div>
            <div class="modes">
              <button aria-label="Sheet sorter"><svg width="24" height="24" viewBox="0 0 24 24"><path d="M0 0h6v6H0zM9 0h6v6H9zM18 0h6v6h-6zM0 9h6v6H0zM9 9h6v6H9zM18 9h6v6h-6zM0 18h6v6H0zM9 18h6v6H9zM18 18h6v6h-6z" /></svg></button>
              <button aria-label="Filmstrip"><svg width="24" height="24" viewBox="0 0 24 24"><path d="M0 0h24v13H0zM0 16h6v8H0zM9 16h6v8H9zM18 16h6v8h-6z" /></svg></button>
              <button aria-label="Tabs"><svg width="24" height="24" viewBox="0 0 24 24"><path d="M0 0h24v24H0z" fill="#4d4d4d" /></svg></button>
            </div>
          </div>
        </footer>
      </main>
    </div>
  </div>
</template>

<style>
html, body { margin: 0; background: #04040a; }
</style>

<style scoped>
* { box-sizing: border-box; }
.desktop {
  min-height: 100vh; display: flex; flex-direction: column;
  font-family: 'Noto Sans', 'Open Sans', sans-serif; font-size: 26px; line-height: 36px; color: #000;
  background: linear-gradient(#030308 0, #05060f 200px, #14234a 700px, #3a5f94 1300px, #6283b0 1600px);
}
.sprite { position: absolute; width: 0; height: 0; }
button { margin: 0; padding: 0; border: 0; background: none; font: inherit; color: inherit; text-align: left; white-space: nowrap; }
select { margin: 0; border: 0; background: none; appearance: none; font: inherit; color: #000; }
svg { display: block; flex: none; }
h1, h2, h3, ul { margin: 0; padding: 0; font-weight: 400; list-style: none; }
h2 { font-size: 26px; }
.green { color: #1f7a5a; }

/* Menu bar */
.menubar {
  height: 44px; display: flex; justify-content: space-between; align-items: center; padding-top: 2px;
  background: linear-gradient(90deg, #cbcbcc, #c9cacd 60%, #d0d1da);
  font-family: Inter, Roboto, sans-serif; font-size: 27px; line-height: 42px; color: #1b1b1d;
}
.menus { display: flex; align-items: center; gap: 38px; padding-left: 39px; }
.apple { padding-bottom: 4px; }
.app-name { margin-right: 3px; font-weight: 700; }
.extras { display: flex; align-items: center; gap: 24px; padding-right: 45px; }
.battery { display: flex; align-items: center; gap: 8px; font-size: 24px; }
.extras time { margin-right: 12px; font-size: 28px; }
.extras button:last-child { margin-left: 4px; }

/* Desktop */
.stage { flex: 1; display: grid; grid-template-columns: 108px minmax(0, 1fr); padding: 2px 2px 0 0; }
.dock-space { padding: 70px 0 74px; }
.dock {
  height: 100%; display: flex; flex-direction: column; padding: 7px 0; border-radius: 0 10px 10px 0;
  background: linear-gradient(#504e54 0, #514f61 17%, #515779 30%, #4d64a0 44%, #4a79bd 53%, #46a5ec 67%, #73cdee 74%, #aedfee 79%, #a5c8ee 86%, #95b7e8 93%, #84abe0 100%);
}
.dock button { flex: 1; min-height: 0; position: relative; }
.dock svg { width: 108px; height: 90px; }
.dock .running::before { content: ''; position: absolute; left: 4px; top: 41px; width: 8px; height: 8px; border-radius: 4px; background: #07122e; }
.dock hr { width: 80px; height: 2px; margin: 20px 0 18px 14px; border: 0; background: #7d9dc8; }
.cal-month { font: 13px Inter, sans-serif; fill: #fff; text-anchor: middle; }
.cal-day { font: 300 38px Inter, sans-serif; fill: #222; text-anchor: middle; }
.shield { font: 700 8px Inter, sans-serif; fill: #fff; text-anchor: middle; }
.three-d { font: 10px Inter, sans-serif; fill: #333; text-anchor: middle; }
.sublime { font: 700 44px Inter, sans-serif; fill: #ff9a2e; text-anchor: middle; }
.tex { font: 30px 'Liberation Serif', serif; fill: #f6e21c; }

/* Window */
.window { position: relative; display: flex; flex-direction: column; min-width: 0; border-radius: 10px; overflow: hidden; background: #ececec; }
.window::after { content: ''; position: absolute; inset: 0 auto 0 0; width: 72px; background: linear-gradient(90deg, rgba(0, 0, 0, 0.08), rgba(0, 0, 0, 0.02) 50%, transparent); pointer-events: none; }
.titlebar { height: 44px; display: grid; grid-template-columns: 1fr auto 1fr; align-items: center; border-bottom: 2px solid #b1b1b1; background: linear-gradient(#f0f0f0, #e8e8e8 10%, #d3d3d3); }
.lights { display: flex; gap: 16px; padding-left: 16px; }
.lights button { width: 24px; height: 24px; border-radius: 12px; border: 1px solid #e0443e; background: #fc605b; }
.lights .mini { border-color: #dea123; background: #fdbc40; }
.lights .zoom { border-color: #1aab29; background: #34c84a; }
h1 { display: flex; align-items: center; gap: 10px; padding-top: 2px; font-family: Inter, Roboto, sans-serif; font-size: 25px; line-height: 40px; color: #4a4a4a; }

.toolbar {
  height: 64px; display: grid; align-items: center; justify-items: start; padding-left: 13px;
  grid-template-columns:
    49px 19px 54px 53px 46px 24px 44px 16px 48px 30px 50px 48px 28px 20px 44px 32px 44px 28px 18px
    52px 52px 50px 48px 28px 52px 16px 48px 25px 237px 48px 21px 43px 28px 20px 48px minmax(20px, 1fr) 334px 33px;
}
.sep { width: 2px; height: 46px; background: repeating-linear-gradient(#777 0 2px, transparent 2px 6px); }
.dim { opacity: 0.5; }
.abc { font-size: 22px; color: #5f6d82; }
.fit { position: relative; width: 224px; height: 40px; border-radius: 7px; background: #fff; border: 1px solid #c6c6c6; border-bottom-color: #a8a8a8; overflow: hidden; }
.fit select { width: 100%; height: 38px; padding: 0 48px 6px 16px; font-size: 22px; line-height: 32px; }
.fit svg { position: absolute; top: -1px; right: -1px; background: linear-gradient(#6db3f8, #147bfd); pointer-events: none; }
.show-me {
  align-self: end; justify-self: stretch; height: 48px; display: flex; align-items: center; justify-content: center; gap: 12px;
  border: 2px solid #a2a2a2; border-bottom: 2px solid #b9bec2; border-radius: 12px 12px 0 0; background: #e0ecf6; box-shadow: inset 1px 2px #fff;
}
.toolbar .show-me { grid-column: 37; }

/* Data pane */
.body { flex: 1; display: flex; min-height: 0; }
.data-pane { width: 401px; flex: none; display: flex; flex-direction: column; border-top: 2px solid #a0a0a0; background: #fff; }
.pane-tabs { height: 48px; display: flex; background: #f2f2f2; }
.pane-tabs button { flex: 1; padding-top: 3px; line-height: 45px; }
.pane-tabs .active { flex: none; width: 178px; padding-left: 14px; font-weight: 700; }
.pane-tabs .analytics { display: flex; justify-content: space-between; align-items: center; padding: 2px 16px 0 14px; border-left: 2px solid #9c9c9c; border-bottom: 2px solid #9c9c9c; background: #dadada; }
.source { height: 55px; display: flex; align-items: center; padding: 0 0 4px 19px; background: #f2f2f2; border-bottom: 2px solid #c8c8c8; }
.source svg { margin-right: 1px; }
.pane-head { height: 45px; flex: none; display: flex; align-items: center; gap: 12px; padding: 0 16px 2px 14px; background: #f1f1f1; }
.pane-head h2 { flex: 1; }
.fields { padding: 0 0 0 12px; }
.dims { flex: 52 0 0; }
.meas { flex: 63 0 0; }
.fields li { height: 36px; display: flex; padding-bottom: 4px; line-height: 32px; white-space: nowrap; }
.fields .generated { font-size: 28px; font-style: italic; }
.glyph { width: 50px; height: 36px; flex: none; display: flex; align-items: center; padding-left: 1px; font-size: 18px; font-style: normal; color: #3460a8; }
.glyph svg { margin: 0 0 0 3px; }
.glyph svg[width='20'] { margin-left: 5px; }
.glyph svg[width='32'] { margin-left: -1px; }
.glyph.green, .glyph .green { color: #1f7a5a; }

/* Shelves and cards */
.workspace { flex: 1; min-width: 0; display: flex; gap: 12px; padding: 13px 16px 16px 12px; border: solid #8c8c8c; border-width: 3px 0 0 3px; background: #e6e6e6; box-shadow: inset -4px -4px #fafafa; }
.cards { width: 308px; flex: none; display: flex; flex-direction: column; gap: 12px; }
.card { background: #fdfdfd; border: solid #c4c4c4; border-width: 0 2px 2px 0; border-radius: 12px 12px 0 0; box-shadow: 2px 2px #d8d8d8; }
.card h3 { padding: 0 10px; font-size: 22px; line-height: 38px; border-radius: 10px 10px 0 0; background: #f2f2f0; box-shadow: inset 2px 2px #fff; color: #111; }
.pages { min-height: 112px; }
.filters { min-height: 134px; }
.marks { min-height: 398px; }
.values { min-height: 226px; }
.stack { display: flex; flex-direction: column; gap: 6px; padding: 6px 8px 0 10px; }
.pill { height: 40px; display: flex; justify-content: space-between; align-items: center; padding: 0 17px 2px 16px; border: 2px solid #abd0bb; border-radius: 14px; background: #bddfcc; line-height: 34px; }
.dim-pill { background: #c9daf4; border-color: #b0c8ea; }
.marks-body { padding: 14px 10px 14px 12px; background: #fff; }
.mark-type { position: relative; display: flex; height: 44px; }
.mark-type select { flex: 1; padding: 0 40px 2px 60px; border: 2px solid #b0b0b0; border-radius: 7px; background: #fff; font-size: 22px; }
.area-icon { position: absolute; left: 17px; top: 8px; }
.updown { position: absolute; right: 13px; top: 11px; }
.mark-grid { display: grid; grid-template-columns: repeat(3, 84px); grid-auto-rows: 84px; gap: 16px; margin-top: 16px; }
.mark-grid button { display: flex; flex-direction: column; align-items: center; justify-content: center; gap: 8px; border: 2px solid #b0b0b0; border-radius: 8px; background: #fff; font-size: 22px; line-height: 32px; color: #222; }
.mark-grid .with-icon { justify-content: flex-start; padding-top: 9px; }
.abc-icon { display: flex; flex-direction: column; height: 28px; font-size: 17px; line-height: 16px; color: #5f6d82; }
.encoding { display: flex; align-items: center; gap: 11px; padding: 0 10px 0 13px; }
.encoding .pill { flex: 1; }

.view { flex: 1; min-width: 0; display: flex; flex-direction: column; gap: 12px; }
.shelf { height: 50px; display: flex; align-items: center; gap: 4px; background: #fdfdfd; border: solid #c4c4c4; border-width: 0 2px 2px 0; border-radius: 12px 0 0; box-shadow: 2px 2px #d8d8d8; }
.shelf h3 { width: 188px; height: 48px; display: flex; align-items: center; gap: 8px; padding-left: 10px; border-radius: 12px 0 0; background: #f2f2f0; box-shadow: inset 2px 2px #fff; font-size: 22px; line-height: 48px; color: #111; }
.shelf .pill { width: 296px; }
.canvas { flex: 1; display: flex; align-items: flex-start; gap: 12px; }
.chart { flex: 1; min-width: 0; align-self: stretch; background: #fff; }
.chart svg { width: 100%; height: auto; }
.axis text { font: 22px 'Liberation Sans', Arial, sans-serif; fill: #555; }
.legend { width: 308px; flex: none; background: #fff; }
.legend ul { padding: 6px 8px 8px; display: grid; gap: 12px; }
.legend li { display: flex; align-items: center; gap: 10px; font: 22px/28px 'Liberation Sans', Arial, sans-serif; color: #555; }
.legend i { width: 28px; height: 28px; }
.legend .green { background: #80c680; }
.legend .blue { background: #77acd1; }
.legend .orange { background: #ffb26e; }

/* Sheet tabs and status bar */
.sheet-tabs { height: 62px; display: flex; border-top: 2px solid #c4c4c4; border-bottom: 2px solid #8f8f8f; background: #e4e4e4; color: #666; }
.data-source { width: 263px; display: flex; align-items: center; gap: 9px; padding-left: 17px; border-right: 2px solid #555; }
.sheet { width: 144px; padding-left: 12px; border-right: 2px solid #bcbcbc; background: #f0f0f0; }
.sheet.active { background: #fff; border-right-color: #555; font-weight: 700; color: #444; }
.new-tabs { display: flex; align-items: center; gap: 32px; padding-left: 17px; }
.status { height: 40px; display: flex; align-items: center; gap: 49px; padding-left: 24px; font-size: 23px; }
.status-cells { flex: 1; align-self: stretch; display: flex; justify-content: flex-end; }
.status-cells i, .pager, .modes { border-left: 2px solid #d4d4d4; display: flex; align-items: center; }
.status-cells i { width: 54px; }
.status-cells i:first-child { width: 254px; }
.status-cells i:nth-child(4) { width: 94px; }
.pager { width: 142px; padding-left: 15px; gap: 20px; fill: #adadad; }
.modes { width: 154px; padding-left: 16px; gap: 18px; fill: #b2b2b2; }
</style>
